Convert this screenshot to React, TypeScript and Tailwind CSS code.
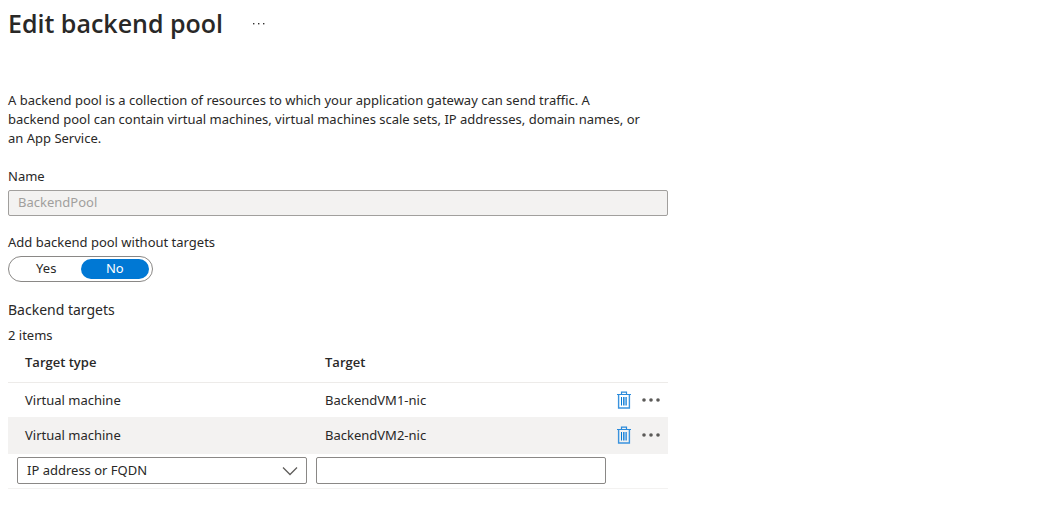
import { useState } from "react";

function TrashIcon() {
  return (
    <svg width="16" height="18" viewBox="0 0 16 18" fill="none" aria-hidden="true">
      <path d="M1 3.5h14M5.5 3V1.2h5v2" stroke="#2a8adb" strokeWidth="1.2" />
      <path d="M2.6 4v13h10.8V4" stroke="#3a93de" strokeWidth="1.4" />
      <path d="M5.5 6v8.5" stroke="#0078d4" strokeWidth="1" />
      <path d="M7.5 6v8.5" stroke="#2a8adb" strokeWidth="1" />
      <path d="M9 6v8.5" stroke="#7ab6e8" strokeWidth="2" />
      <path d="M10.5 6v8.5" stroke="#4c9de0" strokeWidth="1" />
    </svg>
  );
}

function MoreIcon() {
  return (
    <svg width="18" height="6" viewBox="0 0 18 6" fill="#5b5a58" aria-hidden="true">
      <circle cx="2" cy="3" r="1.8" />
      <circle cx="9" cy="3" r="1.8" />
      <circle cx="16" cy="3" r="1.8" />
    </svg>
  );
}

const targets = [
  { type: "Virtual machine", name: "BackendVM1-nic" },
  { type: "Virtual machine", name: "BackendVM2-nic" },
];

export default function App() {
  const [withoutTargets, setWithoutTargets] = useState("No");

  return (
    <main className="min-h-screen bg-white px-2 pt-1 pb-5 font-['Noto_Sans','Open_Sans',sans-serif] text-[13px] leading-[19px] text-[#292827]">
      <header className="flex items-center gap-[29px]">
        <h1 className="font-['Open_Sans','Noto_Sans',sans-serif] text-[25px] leading-[38px] font-semibold">
          Edit backend pool
        </h1>
        <button type="button" aria-label="More options" className="flex h-5 items-center">
          <svg width="14" height="4" viewBox="0 0 14 4" fill="#323130" aria-hidden="true">
            <rect x="1" y="2" width="1.4" height="1.4" />
            <rect x="6" y="2" width="1.4" height="1.4" />
            <rect x="11" y="2" width="1.4" height="1.4" />
          </svg>
        </button>
      </header>

      <div className="mt-[49px] max-w-[660px]">
        <p className="max-w-[635px]">
          A backend pool is a collection of resources to which your application gateway can send traffic. A backend
          pool can contain virtual machines, virtual machines scale sets, IP addresses, domain names, or an App
          Service.
        </p>

        <label htmlFor="pool-name" className="mt-[19px] block">
          Name
        </label>
        <input
          id="pool-name"
          disabled
          defaultValue="BackendPool"
          className="mt-1 block h-[26px] w-full rounded-xs border border-[#a19f9d] bg-[#f3f2f1] px-[9px] pb-0.5 text-[#a19f9d]"
        />

        <fieldset className="mt-[17px]">
          <legend className="mb-1">Add backend pool without targets</legend>
          <div className="flex h-[26px] w-[145px] rounded-full border border-[#8a8886] px-[3px] py-0.5">
            {["Yes", "No"].map((option) => (
              <label
                key={option}
                className="flex flex-1 cursor-pointer items-center justify-center rounded-full pb-px has-checked:bg-[#0078d4] has-checked:text-white"
              >
                <input
                  type="radio"
                  name="without-targets"
                  className="sr-only"
                  checked={withoutTargets === option}
                  onChange={() => setWithoutTargets(option)}
                />
                {option}
              </label>
            ))}
          </div>
        </fieldset>

        <h2 className="mt-[18px] text-sm leading-5">Backend targets</h2>
        <p className="mt-1.5">2 items</p>

        <table className="w-full table-fixed border-collapse text-left">
          <colgroup>
            <col className="w-[300px]" />
            <col />
            <col className="w-[62px]" />
          </colgroup>
          <thead className="font-['Open_Sans','Noto_Sans',sans-serif]">
            <tr className="h-[37px] border-b border-[#edebe9]">
              <th className="px-[17px] pt-0 pb-px font-semibold">Target type</th>
              <th className="px-[17px] pt-0 pb-px font-semibold">Target</th>
              <td />
            </tr>
          </thead>
          <tbody>
            {targets.map((target) => (
              <tr
                key={target.name}
                className="h-[35px] odd:[&>td:not(:last-child)]:pt-0.5 even:h-[37px] even:bg-[#f3f2f1] even:[&>td]:pb-px"
              >
                <td className="px-[17px]">{target.type}</td>
                <td className="px-[17px]">{target.name}</td>
                <td>
                  <div className="flex items-center gap-2.5 pl-2.5">
                    <button type="button" aria-label={`Delete ${target.name}`}>
                      <TrashIcon />
                    </button>
                    <button type="button" aria-label={`More actions for ${target.name}`}>
                      <MoreIcon />
                    </button>
                  </div>
                </td>
              </tr>
            ))}
            <tr className="h-[34px] border-b border-[#f3f2f1]">
              <td className="py-0 pr-px pl-[9px]">
                <div className="grid items-center">
                  <select
                    aria-label="Target type"
                    className="col-start-1 row-start-1 h-[27px] w-full appearance-none rounded-xs border border-[#8a8886] bg-white pr-8 pl-[9px]"
                  >
                    <option>IP address or FQDN</option>
                    <option>Virtual machine</option>
                  </select>
                  <svg
                    width="16"
                    height="10"
                    viewBox="0 0 16 10"
                    fill="none"
                    aria-hidden="true"
                    className="pointer-events-none col-start-1 row-start-1 mr-[9px] justify-self-end"
                  >
                    <path d="M1 1.5l7 7 7-7" stroke="#605e5c" strokeWidth="1.3" />
                  </svg>
                </div>
              </td>
              <td className="py-0 pl-2">
                <input
                  aria-label="Target"
                  className="block h-[27px] w-full rounded-xs border border-[#8a8886] bg-white px-2"
                />
              </td>
              <td />
            </tr>
          </tbody>
        </table>
      </div>
    </main>
  );
}
